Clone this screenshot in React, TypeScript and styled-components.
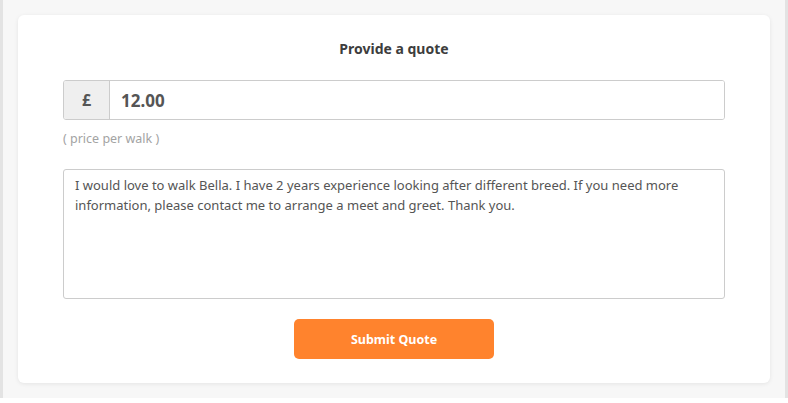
import React from "react";
import styled, { createGlobalStyle } from "styled-components";

const Global = createGlobalStyle`
  html, body { margin: 0; padding: 0; background: #ffffff; }
  body { font-family: "Noto Sans", "Open Sans", sans-serif; }
  * { box-sizing: border-box; }
`;

const Page = styled.div`
  width: 788px;
  height: 398px;
  background: #f7f7f7;
  border-left: 3px solid #e3e3e3;
  border-right: 3px solid #e3e3e3;
  padding: 15px 15px;
`;

const Card = styled.div`
  background: #ffffff;
  border-radius: 6px;
  box-shadow: 0 1px 4px rgba(0, 0, 0, 0.08);
  height: 368px;
  padding: 24px 45px;
  display: flex;
  flex-direction: column;
  align-items: stretch;
`;

const Title = styled.h2`
  margin: 0;
  font-size: 14px;
  line-height: 20px;
  font-weight: 700;
  color: #3d3d3d;
  text-align: center;
`;

const InputGroup = styled.div`
  margin-top: 21px;
  display: flex;
  height: 40px;
  border: 1px solid #cccccc;
  border-radius: 3px;
  overflow: hidden;
`;

const Addon = styled.span`
  width: 46px;
  flex: none;
  display: flex;
  align-items: center;
  justify-content: center;
  background: #efefef;
  border-right: 1px solid #cccccc;
  font-size: 16px;
  font-weight: 700;
  color: #555555;
`;

const PriceInput = styled.input`
  flex: 1;
  border: none;
  outline: none;
  padding: 0 11px;
  font-family: inherit;
  font-size: 17px;
  font-weight: 700;
  color: #555555;
  background: #ffffff;
`;

const Hint = styled.div`
  margin-top: 10px;
  font-size: 12.5px;
  line-height: 18px;
  color: #a3a3a3;
`;

const Message = styled.textarea`
  margin-top: 21px;
  height: 130px;
  border: 1px solid #cccccc;
  border-radius: 3px;
  padding: 5px 11px;
  resize: none;
  outline: none;
  font-family: inherit;
  font-size: 13px;
  line-height: 20px;
  color: #555555;
`;

const Submit = styled.button`
  margin: 20px auto 0;
  width: 200px;
  height: 40px;
  border: none;
  border-radius: 5px;
  background: #ff832d;
  color: #ffffff;
  font-family: inherit;
  font-size: 12.5px;
  font-weight: 700;
  cursor: pointer;
`;

export default function App() {
  return (
    <>
      <Global />
      <Page>
        <Card>
          <Title>Provide a quote</Title>
          <InputGroup>
            <Addon>£</Addon>
            <PriceInput defaultValue="12.00" />
          </InputGroup>
          <Hint>( price per walk )</Hint>
          <Message defaultValue="I would love to walk Bella. I have 2 years experience looking after different breed. If you need more information, please contact me to arrange a meet and greet. Thank you." />
          <Submit>Submit Quote</Submit>
        </Card>
      </Page>
    </>
  );
}
